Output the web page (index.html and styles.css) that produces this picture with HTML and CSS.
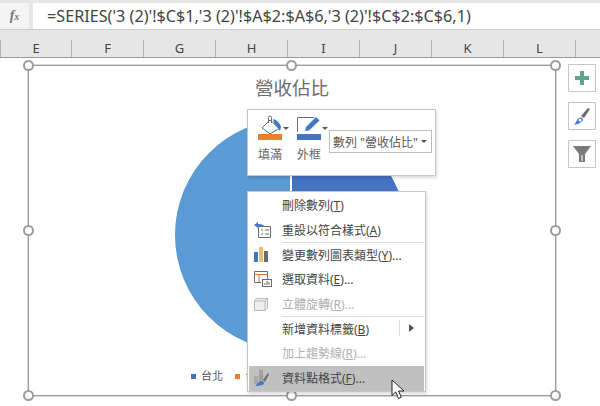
FILE: index.html
```html
<!DOCTYPE html>
<html lang="zh-Hant">
<head>
    <meta charset="UTF-8">
    <meta name="viewport" content="width=device-width, initial-scale=1.0">
    <title>營收佔比</title>
    <link rel="stylesheet" href="styles.css">
</head>
<body>

    <div class="formula-bar">
        <div class="fx-box">f<sub>x</sub></div>
        <div class="formula">=SERIES('3 (2)'!$C$1,'3 (2)'!$A$2:$A$6,'3 (2)'!$C$2:$C$6,1)</div>
    </div>

    <div class="col-headers">
        <div>E</div><div>F</div><div>G</div><div>H</div><div>I</div><div>J</div><div>K</div><div>L</div><div></div>
    </div>

    <div class="sheet">
        <div class="chart">
            <div class="chart-title">營收佔比</div>
            <svg class="pie" width="232" height="232" viewBox="0 0 232 232">
                <circle cx="116" cy="116" r="116" fill="#5b9bd5"/>
                <path d="M116 116V0A116 116 0 0 1 232 116A116 116 0 0 1 116 232Z" fill="#4472c4"/>
                <path d="M116 0V116" stroke="#fff" stroke-width="2"/>
            </svg>
            <div class="legend">
                <span class="swatch swatch-blue"></span><span class="legend-label">台北</span>
                <span class="swatch swatch-orange"></span><span class="legend-label">台中</span>
            </div>

            <span class="handle h-tl"></span><span class="handle h-tc"></span><span class="handle h-tr"></span>
            <span class="handle h-ml"></span><span class="handle h-mr"></span>
            <span class="handle h-bl"></span><span class="handle h-bc"></span><span class="handle h-br"></span>
        </div>

        <div class="side-buttons">
            <div class="side-btn">
                <svg width="14" height="14" viewBox="0 0 14 14"><path d="M5 0h4v5h5v4H9v5H5V9H0V5h5Z" fill="#5fa58a"/></svg>
            </div>
            <div class="side-btn">
                <svg width="18" height="18" viewBox="0 0 18 18">
                    <path d="M8 9l7-8 2 1-6 9Z" fill="#6b6b6b"/>
                    <path d="M0 17c3 0 3-2 4-4 1-2 4-3 5-2s2 3-1 4c-2 2-5 3-8 2Z" fill="#3f78c4"/>
                    <circle cx="7" cy="13" r="1.5" fill="#fff"/>
                </svg>
            </div>
            <div class="side-btn">
                <svg width="18" height="18" viewBox="0 0 18 18"><path d="M0 1h18l-6 8v8H6V9Z" fill="#7a7a7a"/><path d="M8.500 10h1v6h-1Z" fill="#fff"/></svg>
            </div>
        </div>

        <div class="mini-bar">
            <div class="mini-tool">
                <div class="mini-icon">
                    <svg width="24" height="26" viewBox="0 0 24 26">
                        <path d="M12 5l9 8.500-9 5.500-8-6Z" fill="#fff" stroke="#6b6b6b"/>
                        <path d="M10.500 8V2.500a1.500 1.500 0 0 1 3 0V8" fill="none" stroke="#6b6b6b"/>
                        <path d="M15 4c4 1 7 4 8 8l-1 4-2-3-4-5Z" fill="#3f78c4"/>
                        <rect x="0" y="19" width="24" height="6" fill="#ed7d31"/>
                    </svg>
                    <span class="mini-caret"></span>
                </div>
                <div class="mini-label">填滿</div>
            </div>
            <div class="mini-tool">
                <div class="mini-icon">
                    <svg width="24" height="26" viewBox="0 0 24 26">
                        <path d="M17 2.500H.5V17" fill="none" stroke="#6b6b6b"/>
                        <path d="M8 16l1-4L19 2l3.500 3.500-10.500 10Z" fill="#3f78c4"/>
                        <rect x="0" y="19" width="24" height="6" fill="#4472c4"/>
                    </svg>
                    <span class="mini-caret"></span>
                </div>
                <div class="mini-label">外框</div>
            </div>
            <div class="series-select">
                <span>數列 "營收佔比"</span>
                <span class="mini-caret"></span>
            </div>
        </div>

        <div class="menu">
            <div class="menu-item"><span class="menu-icon"></span><span>刪除數列(<u>T</u>)</span></div>
            <div class="menu-item">
                <span class="menu-icon">
                    <svg width="17" height="16" viewBox="0 0 17 16">
                        <path d="M4.500 4.500H16.500V15.500H4.500Z" fill="#fff" stroke="#6b6b6b"/>
                        <path d="M7 8h2M11 8h4M7 12h2M11 12h4" stroke="#6b6b6b"/>
                        <path d="M0 3l4-3v2c4 0 6 1 7 3-2-1-4-1-7-1v2Z" fill="#3f78c4"/>
                    </svg>
                </span>
                <span>重設以符合樣式(<u>A</u>)</span>
            </div>
            <div class="menu-sep"></div>
            <div class="menu-item">
                <span class="menu-icon">
                    <svg width="15" height="15" viewBox="0 0 15 15">
                        <rect x="0" y="5" width="4" height="10" fill="#3f78c4"/>
                        <rect x="5" y="0" width="4" height="15" fill="#e8bd78"/>
                        <rect x="10" y="4" width="4" height="11" fill="#6b6b6b"/>
                    </svg>
                </span>
                <span>變更數列圖表類型(<u>Y</u>)...</span>
            </div>
            <div class="menu-item">
                <span class="menu-icon">
                    <svg width="18" height="16" viewBox="0 0 18 16">
                        <path d="M.5 .5H13.500V8M.5 .5V11.500H7" fill="#fff" stroke="#6b6b6b"/>
                        <path d="M.5 3.500H13.500M5 3.500V11" fill="none" stroke="#d9773a"/>
                        <rect x="8.500" y="8.500" width="9" height="7" fill="#fff" stroke="#6b6b6b"/>
                        <path d="M11 14v-2M13 14v-4M15 14v-3" stroke="#6b6b6b"/>
                    </svg>
                </span>
                <span>選取資料(<u>E</u>)...</span>
            </div>
            <div class="menu-item is-disabled">
                <span class="menu-icon">
                    <svg width="14" height="13" viewBox="0 0 14 13">
                        <path d="M2.500 .5H13.500V10L11 12.500H.5V3Z" fill="#f0eef0" stroke="#b8b8b8"/>
                        <path d="M.5 3H11V12.500M11 3l2.500-2.500" fill="none" stroke="#b8b8b8"/>
                    </svg>
                </span>
                <span>立體旋轉(<u>R</u>)...</span>
            </div>
            <div class="menu-sep"></div>
            <div class="menu-item">
                <span class="menu-icon"></span>
                <span>新增資料標籤(<u>B</u>)</span>
                <span class="submenu-mark"></span>
            </div>
            <div class="menu-item is-disabled"><span class="menu-icon"></span><span>加上趨勢線(<u>R</u>)...</span></div>
            <div class="menu-item is-active">
                <span class="menu-icon">
                    <svg width="16" height="16" viewBox="0 0 16 16">
                        <rect x="0" y="6" width="4" height="8" fill="#a8a8a8"/>
                        <rect x="5" y="0" width="4" height="12" fill="#a0a0a0"/>
                        <path d="M9 10l5-7 1 1-4 8Z" fill="#6b6b6b"/>
                        <path d="M1 16c2-1 2-3 4-4s5-1 5 1-4 3-9 3Z" fill="#3f78c4"/>
                    </svg>
                </span>
                <span>資料點格式(<u>F</u>)...</span>
            </div>
        </div>

        <svg class="cursor" width="14" height="21" viewBox="0 0 14 21">
            <path d="M1 1v15.500l3.800-3.500 2.700 6.500 2.800-1.200-2.700-6.300H13Z" fill="#fff" stroke="#222" stroke-linejoin="round"/>
        </svg>
    </div>

</body>
</html>
```

FILE: styles.css
```css
html, body {
    margin: 0;
    height: 100%;
}

body {
    width: 600px;
    height: 406px;
    overflow: hidden;
    background-color: #fff;
    font-family: "Noto Sans", "Noto Sans CJK TC", sans-serif;
    color: #444;
    display: flex;
    flex-direction: column;
}

/* formula bar */
.formula-bar {
    height: 30px;
    padding-top: 3px;
    box-sizing: border-box;
    background-color: #e6e6e6;
    display: flex;
    gap: 4px;
    border-bottom: 1px solid #cfcfcf;
}

.fx-box {
    width: 29px;
    background-color: #f4f4f4;
    color: #777;
    font-family: "Liberation Serif", serif;
    font-style: italic;
    font-weight: bold;
    font-size: 14px;
    text-align: center;
    line-height: 26px;
}

.fx-box sub {
    font-size: 10px;
    vertical-align: baseline;
}

.formula {
    flex: 1;
    background-color: #fff;
    padding-left: 14px;
    font-size: 16.200px;
    line-height: 27px;
    color: #444;
    white-space: nowrap;
}

/* column headers */
.col-headers {
    height: 28px;
    box-sizing: border-box;
    padding-top: 10px;
    background-color: #e6e6e6;
    border-bottom: 1px solid #9c9c9c;
    display: grid;
    grid-template-columns: repeat(8, 72px) 24px;
}

.col-headers div {
    font-size: 13px;
    line-height: 17px;
    text-align: center;
    border-right: 1px solid #b4b4b4;
    color: #444;
}

.col-headers div:first-child {
    border-left: 1px solid #b4b4b4;
}

.col-headers div:last-child {
    border-right: 0;
}

/* everything on top of the sheet */
.sheet {
    position: relative;
    flex: 1;
}

.chart {
    position: absolute;
    left: 28px;
    top: 7px;
    width: 526px;
    height: 329px;
    border: 1px solid #9c9c9c;
    outline: 1px solid #d8d8d8;
}

.chart-title {
    margin-top: 10px;
    text-align: center;
    font-size: 18.500px;
    line-height: 24px;
    color: #6e6e6e;
}

.pie {
    display: block;
    margin: 19px 0 0 146px;
}

.legend {
    margin: 17px 0 0 162px;
    display: flex;
    align-items: center;
    font-size: 11px;
    line-height: 16px;
    color: #555;
}

.swatch {
    width: 5px;
    height: 5px;
    margin-right: 5px;
}

.swatch-blue {
    background-color: #4472c4;
}

.swatch-orange {
    background-color: #ed7d31;
}

.legend-label {
    margin-right: 12px;
}

.handle {
    position: absolute;
    width: 7px;
    height: 7px;
    border: 2px solid #9c9c9c;
    border-radius: 50%;
    background-color: #fff;
}

.h-tl { left: -6px; top: -6px; }
.h-tc { left: 257px; top: -6px; }
.h-tr { right: -6px; top: -6px; }
.h-ml { left: -6px; top: 159px; }
.h-mr { right: -6px; top: 159px; }
.h-bl { left: -6px; bottom: -6px; }
.h-bc { left: 257px; bottom: -6px; }
.h-br { right: -6px; bottom: -6px; }

.side-buttons {
    position: absolute;
    left: 568px;
    top: 6px;
    display: flex;
    flex-direction: column;
    gap: 10px;
}

.side-btn {
    width: 26px;
    height: 26px;
    border: 1px solid #c6c6c6;
    background-color: #fff;
    display: flex;
    align-items: center;
    justify-content: center;
}

/* mini toolbar */
.mini-bar {
    position: absolute;
    left: 247px;
    top: 51px;
    width: 177px;
    height: 60px;
    border: 1px solid #c6c6c6;
    background-color: #fff;
    box-shadow: 1px 2px 3px rgba(0, 0, 0, 0.15);
    display: flex;
    align-items: flex-start;
    padding: 5px 0 0 10px;
}

.mini-tool {
    width: 39px;
}

.mini-icon {
    display: flex;
    align-items: center;
    gap: 1px;
    height: 26px;
}

.mini-caret {
    display: inline-block;
    border-left: 3px solid transparent;
    border-right: 3px solid transparent;
    border-top: 3px solid #555;
}

.mini-label {
    margin-top: 4px;
    width: 24px;
    text-align: center;
    font-size: 12px;
    line-height: 20px;
    color: #666;
    white-space: nowrap;
}

.series-select {
    margin-top: 15px;
    margin-left: -7px;
    width: 103px;
    height: 23px;
    box-sizing: border-box;
    border: 1px solid #bdbdbd;
    display: flex;
    align-items: center;
    justify-content: space-between;
    padding: 0 4px 0 3px;
    font-size: 12px;
    color: #555;
    white-space: nowrap;
}

/* context menu */
.menu {
    position: absolute;
    left: 247px;
    top: 133px;
    width: 175px;
    height: 197px;
    padding: 1px;
    border: 1px solid #c6c6c6;
    background-color: #fff;
    box-shadow: 1px 2px 3px rgba(0, 0, 0, 0.15);
    font-size: 12px;
    color: #444;
}

.menu-item {
    height: 24.700px;
    display: flex;
    align-items: center;
    white-space: nowrap;
    position: relative;
}

.menu-icon {
    width: 33px;
    padding-left: 5px;
    box-sizing: border-box;
    display: flex;
    align-items: center;
    flex-shrink: 0;
}

.menu-sep {
    height: 1px;
    margin: -0.500px 0 -0.500px 33px;
    background-color: #dcdcdc;
}

.is-disabled {
    color: #b0b0b0;
}

.is-active {
    background-color: #c0c0c0;
}

.submenu-mark {
    position: absolute;
    right: 10px;
    top: 8px;
    border-top: 4px solid transparent;
    border-bottom: 4px solid transparent;
    border-left: 5px solid #555;
}

.submenu-mark::before {
    content: "";
    position: absolute;
    left: -15px;
    top: -8px;
    width: 1px;
    height: 16px;
    background-color: #dcdcdc;
}

.cursor {
    position: absolute;
    left: 391px;
    top: 321px;
}
```
